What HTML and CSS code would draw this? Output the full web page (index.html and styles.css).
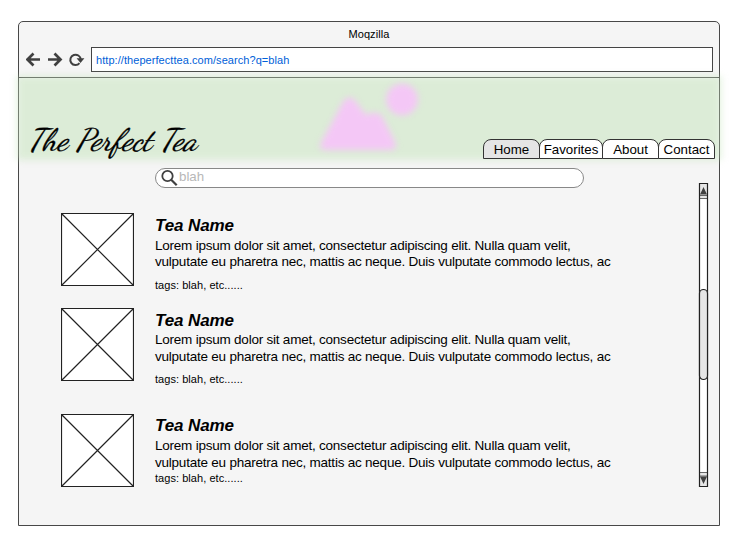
FILE: index.html
```html
<!DOCTYPE html>
<html lang="en">
<head>
<meta charset="utf-8">
<title>The Perfect Tea</title>
<link rel="stylesheet" href="styles.css">
</head>
<body>
<div class="window">
  <header class="chrome">
    <div class="title">Moqzilla</div>
    <div class="toolbar">
      <svg class="nav-icons" width="62" height="20" viewBox="0 0 62 20" fill="none" stroke="#404040">
        <path d="M1.500 10.500H14M7.500 4.500l-6 6 6 6M22 10.500h12.500M28.500 4.500l6 6-6 6" stroke-width="2.700"/>
        <path d="M53.500 14.200a5.200 5.200 0 1 1 1.200-3.700" stroke-width="2"/>
        <path d="M50.600 9.300h7.800l-3.900 4.700z" fill="#404040" stroke="none"/>
      </svg>
      <div class="address">http://theperfecttea.com/search?q=blah</div>
    </div>
  </header>
  <div class="banner">
    <svg class="logo" width="190" height="50" viewBox="0 0 190 50"><text x="2" y="31" textLength="169" lengthAdjust="spacingAndGlyphs">The Perfect Tea</text></svg>
    <svg class="picture" width="130" height="84" viewBox="0 0 130 84">
      <path d="M15 67L37 26q7-9 13 0l10 13q10-5 16 1l13 26q3 7-4 8H19q-7-1-4-7z"/>
      <circle cx="96" cy="23.500" r="15.800"/>
    </svg>
    <nav class="tabs">
      <a class="tab home">Home</a><a class="tab favorites">Favorites</a><a class="tab about">About</a><a class="tab contact">Contact</a>
    </nav>
  </div>
  <main class="content">
    <div class="results">
      <div class="search">
        <svg width="18" height="18" viewBox="0 0 18 18" fill="none" stroke="#404040"><circle cx="6.500" cy="7" r="5.200" stroke-width="1.800"/><path d="M10.200 10.700l5.500 5.500" stroke-width="2.200"/></svg>
        <span>blah</span>
      </div>
      <article class="item first">
        <svg class="thumb" width="73" height="73" viewBox="0 0 73 73"><path d="M.5.5h72v72H.5zl72 72M72.500.5l-72 72"/></svg>
        <div class="copy"><h2>Tea Name</h2><p>Lorem ipsum dolor sit amet, consectetur adipiscing elit. Nulla quam velit,<br>vulputate eu pharetra nec, mattis ac neque. Duis vulputate commodo lectus, ac</p><div class="tags">tags: blah, etc......</div></div>
      </article>
      <article class="item second">
        <svg class="thumb" width="73" height="73" viewBox="0 0 73 73"><path d="M.5.5h72v72H.5zl72 72M72.500.5l-72 72"/></svg>
        <div class="copy"><h2>Tea Name</h2><p>Lorem ipsum dolor sit amet, consectetur adipiscing elit. Nulla quam velit,<br>vulputate eu pharetra nec, mattis ac neque. Duis vulputate commodo lectus, ac</p><div class="tags">tags: blah, etc......</div></div>
      </article>
      <article class="item third">
        <svg class="thumb" width="73" height="73" viewBox="0 0 73 73"><path d="M.5.5h72v72H.5zl72 72M72.500.5l-72 72"/></svg>
        <div class="copy"><h2>Tea Name</h2><p>Lorem ipsum dolor sit amet, consectetur adipiscing elit. Nulla quam velit,<br>vulputate eu pharetra nec, mattis ac neque. Duis vulputate commodo lectus, ac</p><div class="tags">tags: blah, etc......</div></div>
      </article>
    </div>
    <svg class="scrollbar" width="11" height="305" viewBox="0 0 11 305">
      <path d="M1 1h9v303H1z" fill="#fff"/>
      <path d="M1.500.5h8V15h-8zM1.500 290h8v13.500h-8z" fill="#e6e6e6"/>
      <path d="M1 12.500h9M1 15.500h9M1 289.500h9M1 293h9" stroke="#666"/>
      <path d="M5.500 4l3.500 7.500H2zM5.500 301l3.500-7.500H2z" fill="#404040"/>
      <path d="M1.500.5h8v303h-8z" fill="none" stroke="#222" stroke-width="1.200"/>
      <rect x="1.500" y="106.500" width="8" height="90" rx="4" fill="#e6e6e6" stroke="#222" stroke-width="1.200"/>
    </svg>
  </main>
</div>
</body>
</html>
```
FILE: styles.css
```css
* { box-sizing: border-box; }
body { margin: 0; background: #fff; font-family: "Liberation Sans", Arial, sans-serif; color: #000; }
.window { width: 702px; height: 505px; margin: 21px 0 0 18px; border: 1px solid #484848; border-radius: 5px 5px 0 0; background: #f5f5f5; }
.chrome { height: 56px; border-bottom: 1px solid #484848; }
.title { height: 25px; line-height: 25px; text-align: center; font-size: 11px; letter-spacing: .1px; }
.toolbar { display: flex; padding-left: 7px; }
.nav-icons { margin: 2px 3px 0 0; flex: none; }
.address { width: 622px; height: 25px; border: 1px solid #444; background: #fff; color: #0060d8; font-size: 11px; line-height: 24px; letter-spacing: .06px; padding-left: 4px; }
.banner { position: relative; height: 82px; display: flex; align-items: flex-end; }
.banner::before { content: ""; position: absolute; inset: -2px -2px 0; background: rgba(198, 228, 188, .52); filter: blur(3.500px); }
.logo { position: relative; flex: none; margin: 0 0 -9px 7px; overflow: visible; }
.logo text { font: italic 31px "Dancing Script", "Liberation Serif", cursive; stroke: #000; stroke-width: .3px; }
.picture { position: relative; flex: none; margin-left: 90px; overflow: visible; filter: blur(3px); fill: #f4c7f6; }
.tabs { position: relative; display: flex; margin: 0 4px 1px auto; }
.tab { height: 20px; border: 1px solid #333; border-radius: 8px 8px 0 0; margin-left: -1px; background: #fff; text-align: center; font-size: 13.300px; line-height: 20px; }
.home { width: 57px; background: #e5e5e5; }
.favorites { width: 64px; }
.about { width: 57px; }
.contact { width: 57px; }
.content { display: flex; justify-content: space-between; padding: 8px 10px 0 42px; }
.results { width: 560px; }
.search { display: flex; align-items: center; width: 429px; height: 20px; margin-left: 94px; border: 1px solid #888; border-radius: 10px; background: #fff; color: #b8b8b8; font-size: 13.300px; line-height: 16px; padding-left: 5px; }
.search span { margin-bottom: 2px; }
.item { display: flex; height: 73px; margin-top: 25px; }
.item.second { margin-top: 22px; }
.item.third { margin-top: 33px; }
.thumb { flex: none; margin-right: 21px; fill: #fff; stroke: #222; stroke-width: 1.200; }
.copy { white-space: nowrap; }
h2 { margin: 2px 0 0; font-size: 17px; line-height: 22px; letter-spacing: -.1px; font-style: italic; }
p { margin: 0; font-size: 13.500px; line-height: 16.500px; letter-spacing: -.225px; }
.tags { margin-top: 8.500px; font-size: 11px; line-height: 13px; letter-spacing: .05px; }
.first p { padding-top: 1px; line-height: 16px; }
.second .tags { margin-top: 7.500px; }
.third h2 { margin-top: 1px; }
.third .tags { margin-top: 2px; }
.third p { padding-top: 1px; margin-bottom: -1px; }
.scrollbar { flex: none; margin-top: 15px; }
```
